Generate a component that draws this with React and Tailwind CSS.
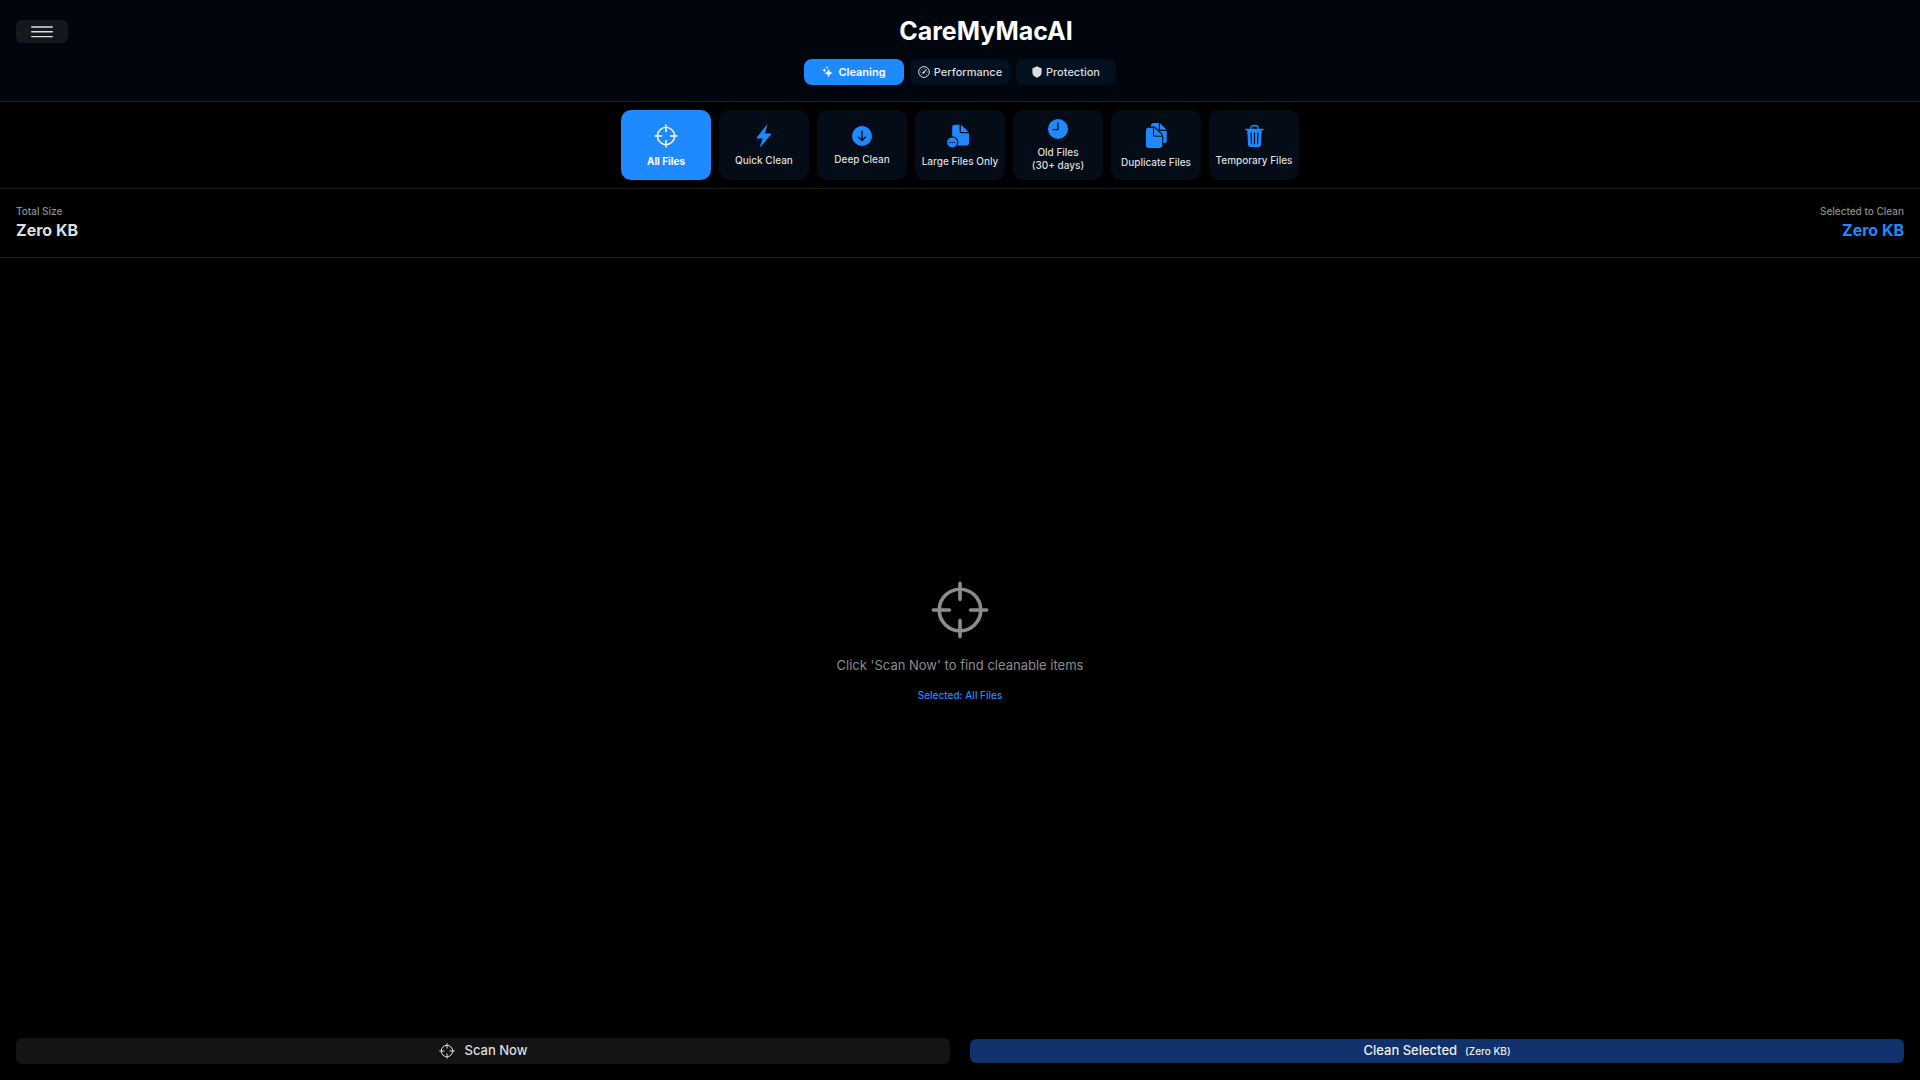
import { useState } from 'react'
import clsx from 'clsx'

function ScopeIcon({ className, stroke = 1.5 }) {
    return (
        <svg viewBox="0 0 24 24" className={className} fill="none" stroke="currentColor" strokeWidth={stroke} strokeLinecap="round">
            <circle cx="12" cy="12" r="8.6" />
            <path d="M12 1v6.6M12 16.4V23M1 12h6.6M16.4 12H23" />
        </svg>
    )
}

function MenuIcon() {
    return (
        <svg viewBox="0 0 22 12" className="w-[22px] h-3" stroke="currentColor" strokeWidth="1.4" strokeLinecap="round">
            <path d="M.7 1h20.6M.7 5.8h20.6M.7 10.6h20.6" />
        </svg>
    )
}

function SparklesIcon() {
    return (
        <svg viewBox="0 0 12 12" className="size-3" fill="currentColor">
            <path d="M6.6 2.400C7 5.300 7.900 6.300 11.400 7.100 7.900 7.900 7 8.900 6.600 12 6.200 8.900 5.300 7.900 2 7.100 5.300 6.300 6.200 5.300 6.600 2.400z" />
            <path d="M2.400 2c.3 1.500.7 2 2.200 2.300-1.500.3-1.900.8-2.200 2.300C2.100 5.100 1.700 4.600.2 4.300 1.700 4 2.100 3.500 2.400 2z" />
            <path d="M5 0c.2.900.5 1.200 1.400 1.400C5.500 1.600 5.200 1.900 5 2.800c-.2-.9-.5-1.200-1.400-1.400C4.500 1.200 4.800.9 5 0z" />
        </svg>
    )
}

function GaugeIcon() {
    return (
        <svg viewBox="0 0 12 12" className="size-3" fill="none" stroke="currentColor" strokeLinecap="round">
            <circle cx="6" cy="6" r="5.400" />
            <path d="M5.400 6.600l2.900-2.900" strokeWidth="1.100" />
            <circle cx="5.400" cy="6.600" r=".7" fill="currentColor" />
            <path d="M2.700 6h.1M3.700 3.700h.1M6 2.700h.1M9.200 6h.1M3.700 8.500h.1M8.300 8.500h.1" strokeWidth=".9" />
        </svg>
    )
}

function ShieldIcon() {
    return (
        <svg viewBox="0 0 10 12" className="w-[10px] h-3" fill="currentColor">
            <path d="M5 .3c1.300.9 2.600 1.400 4 1.600.4.1.6.3.6.7v4.200c0 2.400-1.900 3.700-4.600 4.900C2.300 10.500.4 9.200.4 6.800V2.600c0-.4.2-.6.6-.7C2.400 1.700 3.700 1.200 5 .3z" />
        </svg>
    )
}

function BoltIcon() {
    return (
        <svg viewBox="0 0 16 22" className="w-4 h-[22px]" fill="currentColor">
            <path d="M10.400.3c.5-.4 1-.1.8.5L8.800 8.400h5.800c.6 0 .8.5.4 1L4.800 21.600c-.4.5-1 .2-.8-.4l2.700-7.700H1.200c-.6 0-.8-.5-.4-1z" />
        </svg>
    )
}

function DownCircleIcon() {
    return (
        <svg viewBox="0 0 20 20" className="size-5">
            <circle cx="10" cy="10" r="10" fill="currentColor" />
            <path d="M10 5.300v9M6.600 11.200L10 14.600l3.400-3.400" fill="none" stroke="#030c17" strokeWidth="1.400" strokeLinecap="round" strokeLinejoin="round" />
        </svg>
    )
}

function LargeFileIcon() {
    return (
        <svg viewBox="0 0 26 24" className="w-[26px] h-6" fill="currentColor">
            <path d="M8 .8h4.600v6.600c0 1.200.6 1.800 1.800 1.800H22v9.500c0 1.900-.9 2.800-2.700 2.800H5.200V3.500C5.200 1.700 6.200.8 8 .8z" />
            <path d="M13.900.9c.5.100.9.400 1.300.8l5.400 5.200c.4.400.7.700.8 1.200h-6.900c-.4 0-.6-.2-.6-.6z" />
            <circle cx="5.200" cy="18.400" r="5.600" stroke="#030c17" strokeWidth="1.200" />
            <path d="M2.700 18.400h.1M5.200 18.400h.1M7.700 18.400h.1" stroke="#030c17" strokeWidth="1.500" strokeLinecap="round" />
        </svg>
    )
}

function ClockIcon() {
    return (
        <svg viewBox="0 0 20 20" className="size-5">
            <circle cx="10" cy="10" r="10" fill="currentColor" />
            <path d="M10 4v6.600H5.200" fill="none" stroke="#030c17" strokeWidth="1.300" strokeLinecap="round" strokeLinejoin="round" />
        </svg>
    )
}

function DuplicateIcon() {
    return (
        <svg viewBox="0 0 21 25" className="w-[21px] h-[25px]" fill="currentColor">
            <path d="M7.600 0h5.200v6.400c0 1 .5 1.500 1.500 1.500h6.500v9.600c0 1.700-.8 2.500-2.500 2.500H5V2.600C5 .9 5.900 0 7.600 0z" />
            <path d="M14 .2l6.500 6.500h-5.900c-.4 0-.6-.2-.6-.6z" />
            <path d="M2.600 4.700h4.900c.7 0 1.200.2 1.700.7l6.300 6.400c.5.500.7 1 .7 1.700v8.800c0 1.800-.9 2.700-2.600 2.700h-11C.9 25 0 24.100 0 22.300V7.400C0 5.600.9 4.700 2.600 4.700z" stroke="#030c17" strokeWidth="2.200" paintOrder="stroke" />
            <path d="M7.500 4.700v7c0 1 .6 1.600 1.600 1.600h7.100" fill="none" stroke="#030c17" strokeWidth="1.100" />
        </svg>
    )
}

function TrashIcon() {
    return (
        <svg viewBox="0 0 19 22" className="w-[19px] h-[22px]" fill="none" stroke="currentColor" strokeLinecap="round">
            <path d="M6 4V2.500c0-1.100.7-1.800 1.800-1.800h3.400c1.100 0 1.800.7 1.800 1.800V4" strokeWidth="1.400" />
            <path d="M.8 4.500h17.400" strokeWidth="1.500" />
            <path d="M2.200 5h14.600L16 19.400c-.1 1.600-1 2.500-2.600 2.500H5.600C4 21.900 3.100 21 3 19.400z" fill="currentColor" stroke="none" />
            <path d="M6.100 7.900l.3 10.800M9.500 7.900v10.800M12.900 7.900l-.3 10.800" stroke="#030c17" strokeWidth="1.200" />
        </svg>
    )
}

const tabs = [
    { name: 'Cleaning', icon: <SparklesIcon /> },
    { name: 'Performance', icon: <GaugeIcon /> },
    { name: 'Protection', icon: <ShieldIcon /> },
]

const modes = [
    { name: 'All Files', icon: <ScopeIcon className="size-6" stroke={1.4} />, box: 'h-[26px]' },
    { name: 'Quick Clean', icon: <BoltIcon />, box: 'h-6' },
    { name: 'Deep Clean', icon: <DownCircleIcon />, box: 'h-[22px]' },
    { name: 'Large Files Only', icon: <LargeFileIcon />, box: 'h-[26px]' },
    { name: 'Old Files (30+ days)', icon: <ClockIcon />, box: 'h-[22px]' },
    { name: 'Duplicate Files', icon: <DuplicateIcon />, box: 'h-7' },
    { name: 'Temporary Files', icon: <TrashIcon />, box: 'h-6' },
]

function App() {
    const [tab, setTab] = useState('Cleaning')
    const [mode, setMode] = useState('All Files')

    return (
        <div className="min-h-screen flex flex-col bg-black text-[#dddddd] font-['Inter',sans-serif]">
            <header className="bg-[#01060e] border-b border-[#1c1e20] px-4 py-4">
                <div className="flex items-center">
                    <button type="button" aria-label="Menu" className="flex items-center justify-center w-[52px] h-[23px] rounded-md bg-[#14181c]">
                        <MenuIcon />
                    </button>
                    <h1 className="flex-1 text-center text-[25px] leading-[31px] font-bold text-white">CareMyMacAI</h1>
                </div>
                <nav className="flex justify-center gap-1.5 mt-3">
                    {tabs.map((t) => (
                        <button
                            key={t.name}
                            type="button"
                            onClick={() => setTab(t.name)}
                            className={clsx(
                                'flex items-center justify-center gap-1 w-[100px] h-[26px] rounded-lg text-[11px]',
                                tab === t.name ? 'bg-[#1f8aff] text-white font-semibold' : 'bg-[#03101f] font-medium'
                            )}
                        >
                            {t.icon}
                            {t.name}
                        </button>
                    ))}
                </nav>
            </header>

            <div className="flex justify-center gap-2 py-2 border-b border-[#1c1c1c]">
                {modes.map((m) => (
                    <button
                        key={m.name}
                        type="button"
                        onClick={() => setMode(m.name)}
                        className={clsx(
                            'flex flex-col items-center justify-center gap-1.5 w-[90px] h-[70px] px-1 rounded-[10px] text-[10px] leading-[13px]',
                            mode === m.name ? 'bg-[#1f8aff] text-white font-bold' : 'bg-[#030c17] font-medium'
                        )}
                    >
                        <span className={clsx('flex items-center', m.box, mode === m.name ? 'text-white' : 'text-[#1f8aff]')}>{m.icon}</span>
                        <span className="whitespace-nowrap">
                            {m.name.split(' (')[0]}
                            {m.name.includes('(') && <><br />({m.name.split(' (')[1]}</>}
                        </span>
                    </button>
                ))}
            </div>

            <div className="flex justify-between p-4 border-b border-[#1c1c1c]">
                <div>
                    <p className="text-[10px] leading-[13px] font-medium text-[#8c8c8c]">Total Size</p>
                    <p className="mt-0.5 text-base leading-[21px] font-bold">Zero KB</p>
                </div>
                <div className="text-right">
                    <p className="text-[10px] leading-[13px] font-medium text-[#8c8c8c]">Selected to Clean</p>
                    <p className="mt-0.5 text-base leading-[21px] font-bold text-[#1f8aff]">Zero KB</p>
                </div>
            </div>

            <main className="flex-1 flex flex-col items-center justify-center pt-0.5">
                <ScopeIcon className="size-[58px] text-[#8c8c8c]" />
                <p className="mt-4 text-[13px] leading-5 text-[#8c8c8c]">Click 'Scan Now' to find cleanable items</p>
                <p className="mt-3.5 text-[10px] leading-[13px] font-medium text-[#1f8aff]">Selected: {mode}</p>
            </main>

            <footer className="flex items-center gap-5 p-4">
                <button type="button" className="flex-1 flex items-center justify-center gap-2.5 h-[26px] rounded-md bg-[#141414] text-[13px] font-medium">
                    <ScopeIcon className="size-4" />
                    Scan Now
                </button>
                <button type="button" className="flex-1 flex items-center justify-center gap-2 h-6 rounded-md bg-[#10316b] text-[13px] font-medium text-[#eeeeee]">
                    Clean Selected
                    <span className="text-[10px]">(Zero KB)</span>
                </button>
            </footer>
        </div>
    )
}

export default App
